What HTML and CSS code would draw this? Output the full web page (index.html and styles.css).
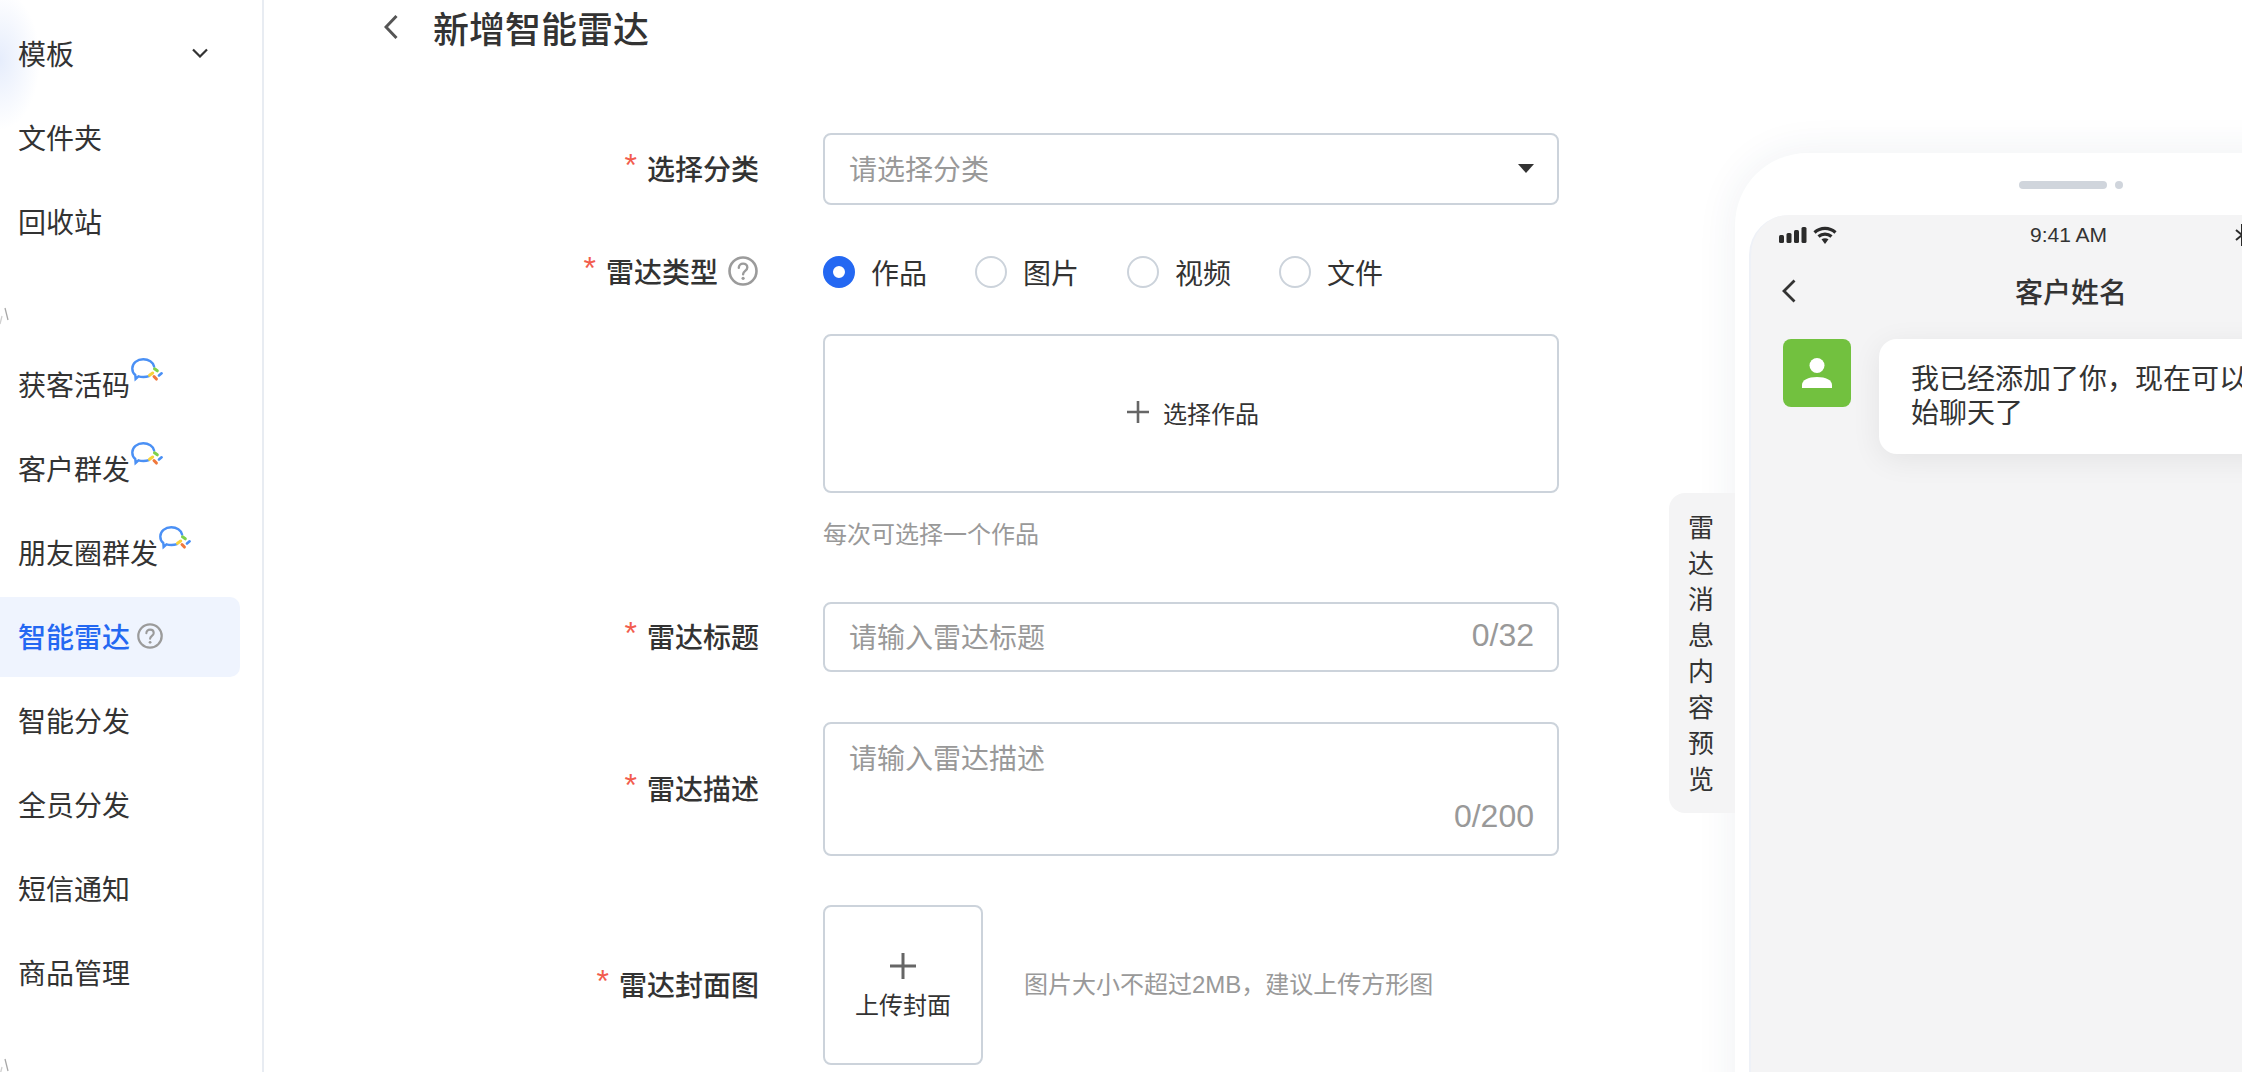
FILE: index.html
```html
<!DOCTYPE html>
<html lang="zh-CN">
<head>
    <meta charset="UTF-8">
    <title>新增智能雷达</title>
    <link rel="stylesheet" href="styles.css">
</head>
<body>
    <svg class="icon-defs" width="0" height="0">
        <symbol id="wecom" viewBox="0 0 32 24">
            <path d="M18 18.2c-1.6.5-3.6.8-5.6.8-1.8 0-3.4-.2-4.900-.7L4.600 21l-.3-4C2.300 15.400 1.300 13.200 1.300 10.500 1.300 5.300 6.200 1.300 12.300 1.300c5.300 0 9.900 3 10.800 7.200" fill="none" stroke="#4a90f5" stroke-width="2.400" stroke-linecap="round"/>
            <path d="M18.500 17.300l3.200-2.300" stroke="#f7d33b" stroke-width="3" stroke-linecap="round"/>
            <path d="M23.500 10.800l2.800 2" stroke="#7fd14a" stroke-width="3" stroke-linecap="round"/>
            <path d="M28 17.500l2.600-2.200" stroke="#4a90f5" stroke-width="2.600" stroke-linecap="round"/>
            <path d="M23 18.500l2.400 2.600" stroke="#f0783c" stroke-width="3" stroke-linecap="round"/>
        </symbol>
        <symbol id="help" viewBox="0 0 30 30">
            <circle cx="15" cy="15" r="13.500" fill="none" stroke="#9b9b9b" stroke-width="2.600"/>
            <path d="M10.800 11.800c0-2.500 1.900-4.200 4.300-4.200s4.200 1.600 4.200 3.800c0 3.300-4.200 3.500-4.200 6.800" fill="none" stroke="#9b9b9b" stroke-width="2.400" stroke-linecap="round"/>
            <circle cx="15.100" cy="22.300" r="1.600" fill="#9b9b9b"/>
        </symbol>
        <symbol id="mark" viewBox="0 0 10 18">
            <path d="M5 1l3 12" stroke="#a8a8a8" stroke-width="1.300" fill="none"/>
            <path d="M2 9L0 17" stroke="#d0d0d0" stroke-width="1.300" fill="none"/>
        </symbol>
    </svg>

    <aside class="sidebar">
        <ul class="nav">
            <li class="nav-item">模板
                <svg class="nav-arrow" width="16" height="10" viewBox="0 0 16 10"><path d="M1 1.500l7 7 7-7" fill="none" stroke="#333" stroke-width="2.200"/></svg>
            </li>
            <li class="nav-item">文件夹</li>
            <li class="nav-item">回收站</li>
        </ul>
        <div class="nav-gap"><svg class="nav-mark" width="10" height="18"><use href="#mark"/></svg></div>
        <ul class="nav">
            <li class="nav-item">获客活码<svg class="nav-badge" width="32" height="24"><use href="#wecom"/></svg></li>
            <li class="nav-item">客户群发<svg class="nav-badge" width="32" height="24"><use href="#wecom"/></svg></li>
            <li class="nav-item">朋友圈群发<svg class="nav-badge" width="32" height="24"><use href="#wecom"/></svg></li>
            <li class="nav-item active">智能雷达<svg class="nav-help" width="26" height="26"><use href="#help"/></svg></li>
            <li class="nav-item">智能分发</li>
            <li class="nav-item">全员分发</li>
            <li class="nav-item">短信通知</li>
            <li class="nav-item">商品管理</li>
        </ul>
        <div class="nav-gap"><svg class="nav-mark" width="10" height="18"><use href="#mark"/></svg></div>
    </aside>

    <main class="main">
        <section class="content">
            <header class="page-head">
                <svg width="14" height="26" viewBox="0 0 14 26"><path d="M12.500 2L2 13l10.500 11" fill="none" stroke="#555" stroke-width="3"/></svg>
                <h1>新增智能雷达</h1>
            </header>

            <div class="form">
                <div class="row row-select">
                    <div class="label"><span class="req">*</span>选择分类</div>
                    <div class="field field-select">
                        <span class="placeholder">请选择分类</span>
                        <svg class="select-arrow" width="16" height="9" viewBox="0 0 16 9"><path d="M0 0h16L8 9z" fill="#333"/></svg>
                    </div>
                </div>

                <div class="row row-radio">
                    <div class="label"><span class="req">*</span>雷达类型<svg class="label-help" width="30" height="30"><use href="#help"/></svg></div>
                    <div class="radios">
                        <div class="radio checked"><i></i>作品</div>
                        <div class="radio"><i></i>图片</div>
                        <div class="radio"><i></i>视频</div>
                        <div class="radio"><i></i>文件</div>
                    </div>
                </div>

                <div class="row row-picker">
                    <div class="label"></div>
                    <div class="picker">
                        <svg width="22" height="22" viewBox="0 0 22 22"><path d="M11 0v22M0 11h22" stroke="#666" stroke-width="2.600"/></svg>
                        选择作品
                    </div>
                </div>
                <div class="row row-note">
                    <div class="label"></div>
                    <div class="note">每次可选择一个作品</div>
                </div>

                <div class="row row-title">
                    <div class="label"><span class="req">*</span>雷达标题</div>
                    <div class="field field-input">
                        <span class="placeholder">请输入雷达标题</span>
                        <span class="count">0/32</span>
                    </div>
                </div>

                <div class="row row-desc">
                    <div class="label"><span class="req">*</span>雷达描述</div>
                    <div class="field field-area">
                        <span class="placeholder">请输入雷达描述</span>
                        <span class="count">0/200</span>
                    </div>
                </div>

                <div class="row row-cover">
                    <div class="label"><span class="req">*</span>雷达封面图</div>
                    <div class="cover-box">
                        <svg width="26" height="26" viewBox="0 0 26 26"><path d="M13 0v26M0 13h26" stroke="#666" stroke-width="3"/></svg>
                        <span>上传封面</span>
                    </div>
                    <div class="note cover-note">图片大小不超过2MB，建议上传方形图</div>
                </div>
            </div>
        </section>

        <section class="preview">
            <div class="preview-tab">雷达消息内容预览</div>
            <div class="phone">
                <div class="phone-top"><i class="speaker"></i><i class="camera"></i></div>
                <div class="screen">
                    <div class="status">
                        <div class="status-left">
                            <svg width="28" height="16" viewBox="0 0 28 16" fill="#2b2b2b">
                                <rect x="0" y="8" width="5" height="8" rx="1.500"/>
                                <rect x="7.500" y="6" width="5" height="10" rx="1.500"/>
                                <rect x="15" y="3" width="5" height="13" rx="1.500"/>
                                <rect x="22.500" y="0" width="5" height="16" rx="1.500"/>
                            </svg>
                            <svg width="24" height="18" viewBox="0 0 24 18">
                                <path d="M1.500 6.500C7.500 1 16.500 1 22.500 6.500" fill="none" stroke="#2b2b2b" stroke-width="3.200"/>
                                <path d="M5.500 10.500c3.800-3.300 9.200-3.300 13 0" fill="none" stroke="#2b2b2b" stroke-width="3.200"/>
                                <path d="M8.500 13.300c2-1.500 5-1.500 7 0L12 18z" fill="#2b2b2b"/>
                            </svg>
                        </div>
                        <div class="status-time">9:41 AM</div>
                        <div class="status-right">
                            <svg width="14" height="22" viewBox="0 0 14 22"><path d="M1 6l12 10-6 5V1l6 5L1 16" fill="none" stroke="#2b2b2b" stroke-width="2"/></svg>
                        </div>
                    </div>
                    <div class="chat-head">
                        <svg width="14" height="24" viewBox="0 0 14 24"><path d="M12.500 1.500L2 12l10.500 10.500" fill="none" stroke="#333" stroke-width="2.800"/></svg>
                        <div class="chat-name">客户姓名</div>
                    </div>
                    <div class="chat-row">
                        <div class="avatar">
                            <svg width="30" height="30" viewBox="0 0 30 30" fill="#fff">
                                <circle cx="15" cy="7.500" r="7.500"/>
                                <path d="M0 30v-3c0-5 6-8 15-8s15 3 15 8v3z"/>
                            </svg>
                        </div>
                        <div class="bubble">我已经添加了你，现在可以开始聊天了</div>
                    </div>
                </div>
            </div>
        </section>
    </main>
</body>
</html>
```

FILE: styles.css
```css
* {
    box-sizing: border-box;
}
html, body {
    margin: 0;
    height: 1072px;
    overflow: hidden;
}
body {
    display: flex;
    font-family: "Liberation Sans", "Noto Sans CJK SC", sans-serif;
    font-size: 28px;
    color: #333;
    background-color: white;
}
.icon-defs {
    position: absolute;
}
ul {
    list-style: none;
    margin: 0;
    padding: 0;
}

/* sidebar */
.sidebar {
    flex: 0 0 264px;
    padding-top: 14px;
    border-right: 2px solid #e8ecf2;
    background: radial-gradient(ellipse 40px 70px at 0 60px, #e6edfc, rgba(255,255,255,0));
}
.nav-item {
    display: flex;
    align-items: center;
    height: 80px;
    margin-bottom: 4px;
    padding: 0 0 2px 18px;
    border-radius: 0 10px 10px 0;
    width: 240px;
}
.nav-item.active {
    background-color: #eff4fe;
    color: #2468f2;
    font-weight: 500;
}
.nav-arrow {
    margin-left: auto;
    margin-right: 32px;
}
.nav-badge {
    margin: 0 0 28px 1px;
}
.nav-help {
    margin-left: 7px;
}
.nav-gap {
    height: 79px;
    padding-top: 41px;
}
.nav-mark {
    display: block;
}

/* form */
.main {
    flex: 1;
    display: flex;
    min-width: 0;
    overflow: hidden;
}
.content {
    flex: 0 0 1295px;
}
.page-head {
    display: flex;
    align-items: center;
    gap: 35px;
    height: 56px;
    padding: 0 0 2px 120px;
}
.page-head h1 {
    margin: 0;
    font-size: 36px;
    font-weight: 500;
}
.row {
    display: flex;
}
.label {
    flex: 0 0 495px;
    display: flex;
    align-items: center;
    justify-content: flex-end;
    margin-right: 64px;
    padding-bottom: 3px;
    font-weight: 500;
}
.req {
    margin-right: 10px;
    color: #f25c4d;
    font-size: 32px;
    font-weight: 400;
    position: relative;
    top: -2px;
}
.label-help {
    margin: 0 1px 0 10px;
}
.row-select {
    margin-top: 77px;
}
.row-radio {
    margin-top: 47px;
    height: 40px;
}
.row-picker {
    margin-top: 42px;
}
.row-note {
    margin-top: 26px;
}
.row-title {
    margin-top: 51px;
}
.row-desc {
    margin-top: 50px;
}
.row-cover {
    margin-top: 49px;
}
.field {
    flex: 0 0 736px;
    border: 2px solid #ccd3db;
    border-radius: 8px;
    padding: 0 23px 0 24px;
}
.field-select, .field-input {
    display: flex;
    align-items: center;
    justify-content: space-between;
    padding-bottom: 3px;
}
.select-arrow {
    position: relative;
    top: 1px;
}
.field-select {
    height: 72px;
}
.field-input {
    height: 70px;
}
.field-area {
    display: flex;
    flex-direction: column;
    justify-content: space-between;
    height: 134px;
    padding-top: 16px;
    padding-bottom: 18px;
    line-height: 40px;
}
.field-area .count {
    align-self: flex-end;
}
.placeholder {
    color: #999;
}
.count {
    color: #999;
    font-size: 32px;
}
.radios {
    display: flex;
    align-items: center;
}
.radio {
    display: flex;
    align-items: center;
    gap: 16px;
    width: 152px;
}
.radio i {
    width: 32px;
    height: 32px;
    border: 2px solid #ccd3db;
    border-radius: 50%;
}
.radio.checked i {
    border: 10px solid #2468f2;
}
.picker {
    flex: 0 0 736px;
    display: flex;
    align-items: center;
    justify-content: center;
    gap: 14px;
    height: 159px;
    padding: 0 0 3px 4px;
    border: 2px solid #ccd3db;
    border-radius: 8px;
    font-size: 24px;
}
.note {
    color: #999;
    font-size: 24px;
    line-height: 32px;
}
.row-cover .label {
    align-self: center;
}
.cover-box {
    flex: 0 0 160px;
    display: flex;
    flex-direction: column;
    align-items: center;
    justify-content: center;
    gap: 11px;
    height: 160px;
    padding-top: 5px;
    border: 2px solid #ccd3db;
    border-radius: 8px;
    font-size: 24px;
    line-height: 32px;
}
.cover-note {
    align-self: center;
    margin-left: 41px;
}

/* phone preview */
.preview {
    flex: 0 0 auto;
    display: flex;
    align-items: flex-start;
    margin-left: 110px;
}
.preview-tab {
    position: relative;
    z-index: 1;
    width: 66px;
    height: 320px;
    margin-top: 493px;
    padding: 17px 20px 0 18px;
    border-radius: 16px 0 0 16px;
    background-color: #f4f4f5;
    font-size: 26px;
    line-height: 36px;
    text-align: center;
}
.phone {
    width: 670px;
    height: 1300px;
    margin-top: 153px;
    padding: 0 14px;
    border-radius: 72px 72px 0 0;
    background-color: white;
    box-shadow: 0 0 40px rgba(40,60,100,0.08);
}
.phone-top {
    display: flex;
    align-items: center;
    gap: 8px;
    height: 62px;
    padding: 2px 0 0 270px;
}
.speaker {
    width: 88px;
    height: 8px;
    border-radius: 4px;
    background-color: #d0d5dc;
}
.camera {
    width: 8px;
    height: 8px;
    border-radius: 50%;
    background-color: #d0d5dc;
}
.screen {
    height: 1200px;
    border-radius: 40px 40px 0 0;
    border-left: 2px solid #eef1f7;
    background-color: #f4f4f5;
}
.status {
    display: grid;
    grid-template-columns: 1fr auto 1fr;
    align-items: center;
    height: 40px;
    padding-right: 5px;
}
.status-left {
    display: flex;
    align-items: center;
    gap: 6px;
    padding-left: 28px;
}
.status-time {
    font-size: 21px;
}
.status-right {
    display: flex;
    padding-left: 128px;
}
.chat-head {
    display: grid;
    grid-template-columns: 1fr auto 1fr;
    align-items: center;
    height: 72px;
}
.chat-head svg {
    margin-left: 31px;
}
.chat-name {
    font-weight: 500;
}
.chat-row {
    display: flex;
    align-items: flex-start;
    gap: 28px;
    margin-top: 12px;
    padding-left: 32px;
}
.avatar {
    display: flex;
    align-items: center;
    justify-content: center;
    width: 68px;
    height: 68px;
    border-radius: 8px;
    background-color: #72c13f;
}
.bubble {
    width: 436px;
    padding: 24px 34px 23px 32px;
    border-radius: 18px;
    background-color: white;
    box-shadow: 0 6px 30px rgba(0,0,0,0.07);
    line-height: 34px;
}
```
